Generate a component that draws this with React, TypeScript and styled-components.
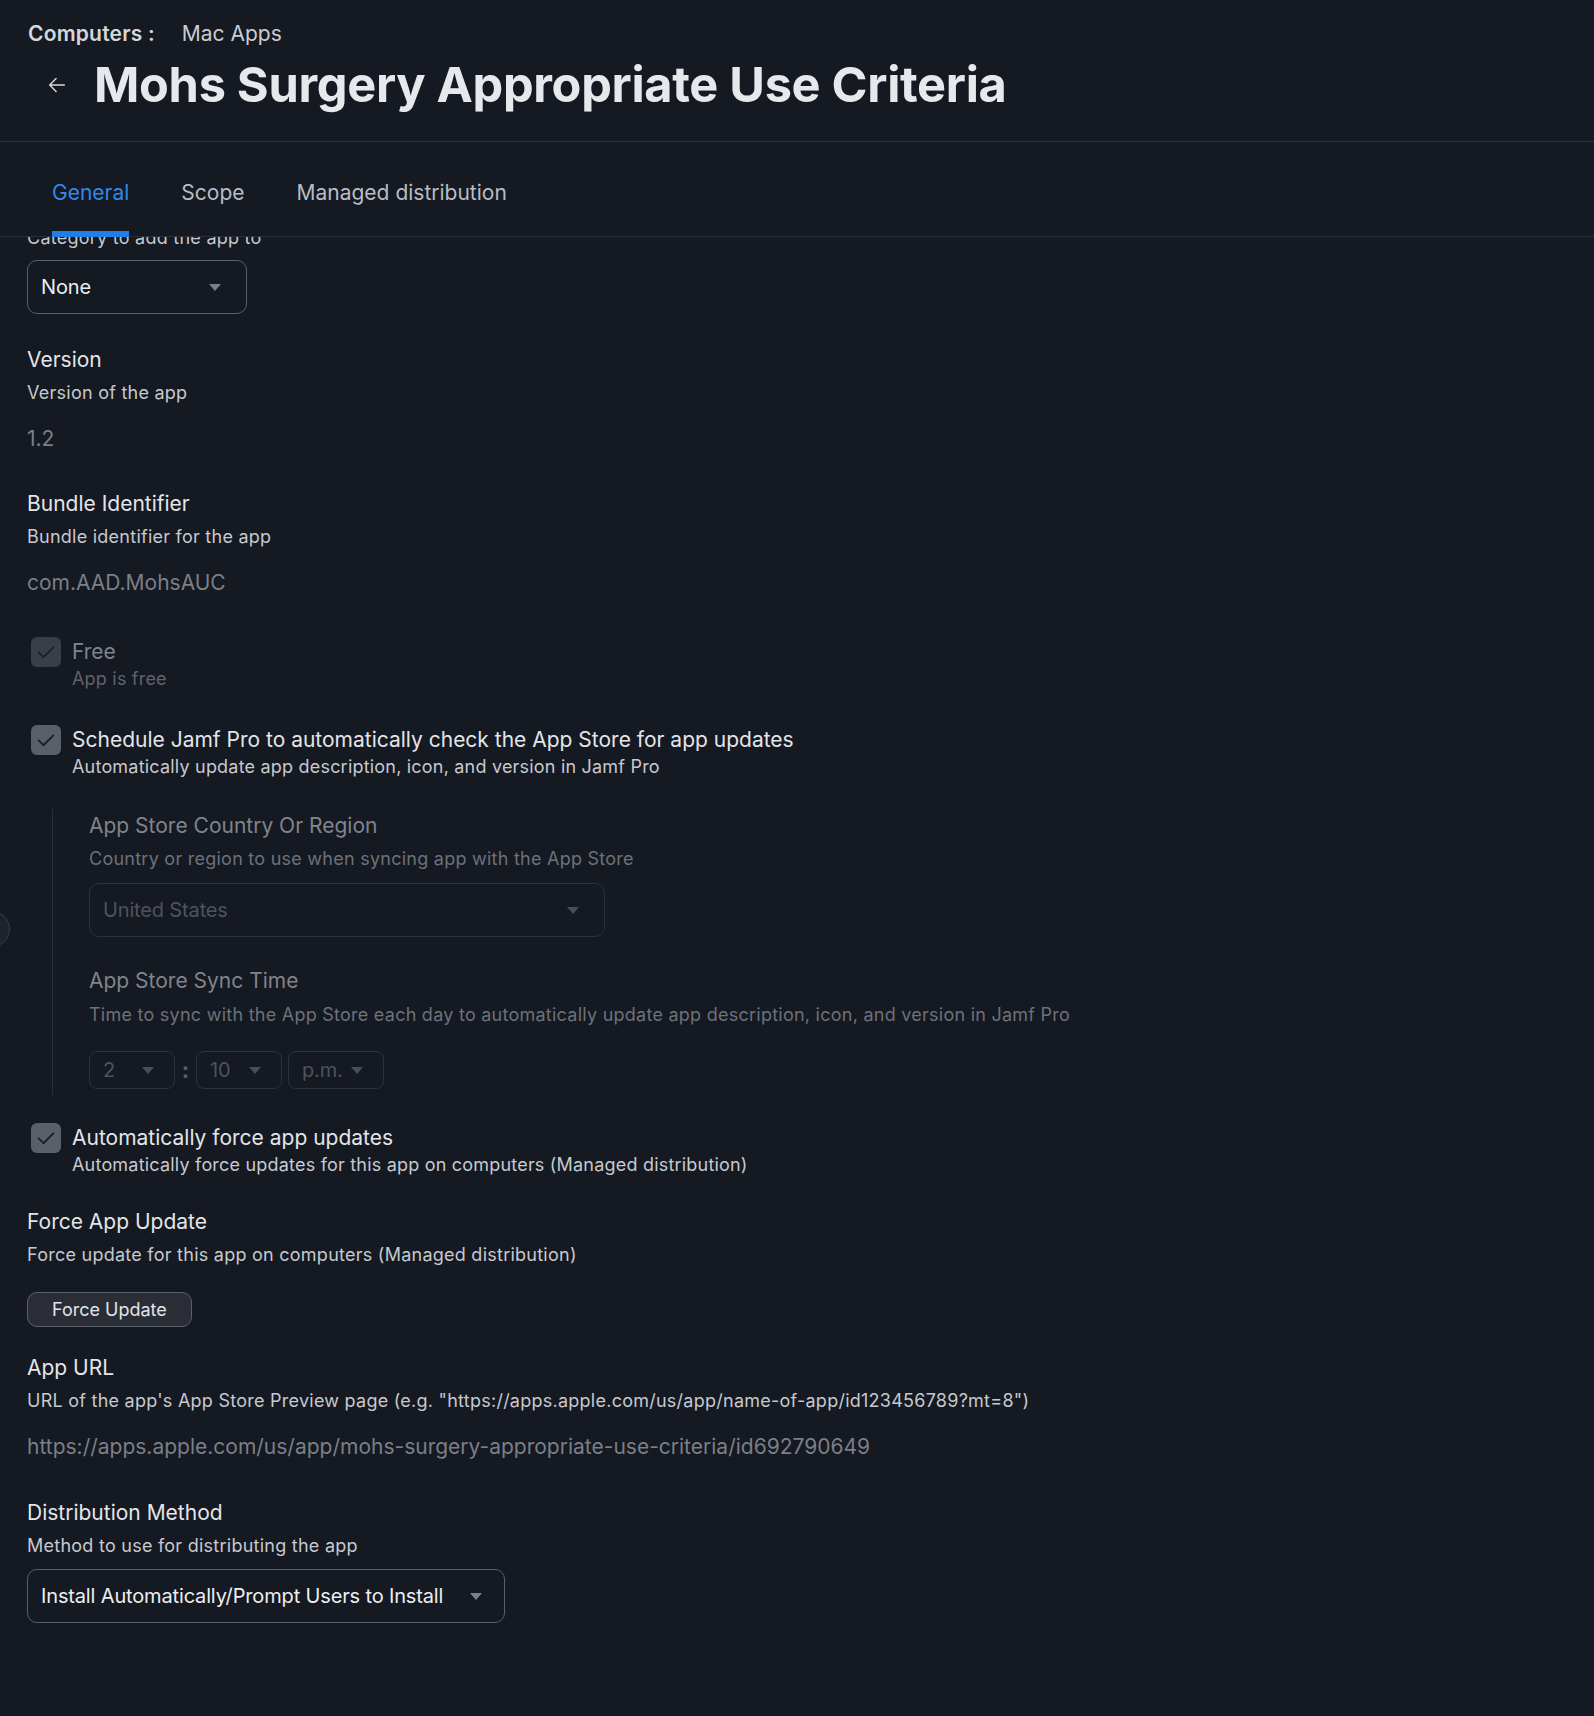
import React from "react";
import styled, { createGlobalStyle } from "styled-components";

const Global = createGlobalStyle`
  html, body { margin: 0; padding: 0; background: #151921; }
  body { font-family: Inter, "Noto Sans", sans-serif; color: #e3e5e9; -webkit-font-smoothing: antialiased; }
  * { box-sizing: border-box; }
`;

const Page = styled.div`
  width: 1594px;
  height: 1716px;
  background: #151921;
  display: flex;
  flex-direction: column;
  overflow: hidden;
  position: relative;
`;

const Header = styled.header`
  padding: 20px 28px 0 28px;
  height: 142px;
  border-bottom: 1px solid #2b2f37;
  display: flex;
  flex-direction: column;
`;

const Crumbs = styled.div`
  display: flex;
  align-items: center;
  gap: 27px;
  font-size: 21px;
  line-height: 28px;
  color: #c9ccd2;
`;

const CrumbRoot = styled.span`
  font-weight: 600;
  color: #d4d7dc;
  letter-spacing: 0.2px;
`;

const TitleRow = styled.div`
  display: flex;
  align-items: center;
  gap: 18px;
  margin-top: 9px;
  padding-left: 18px;
`;

const BackBtn = styled.span`
  display: flex;
  width: 30px;
  color: #d5d8dd;
`;

const Title = styled.h1`
  margin: 0;
  font-size: 48.7px;
  line-height: 56px;
  font-weight: 700;
  color: #e6e8ec;
  letter-spacing: -0.3px;
`;

const Tabs = styled.nav`
  height: 95px;
  border-bottom: 1px solid #2b2f37;
  display: flex;
  align-items: flex-end;
  padding-left: 52px;
  position: relative;
  z-index: 2;
  background: #151921;
`;

const Tab = styled.div<{ $active?: boolean }>`
  font-size: 21px;
  line-height: 28px;
  color: ${(p) => (p.$active ? "#2f8ae8" : "#b9bdc4")};
  padding-bottom: 24px;
  margin-right: 52px;
  border-bottom: 6px solid ${(p) => (p.$active ? "#1f7fe5" : "transparent")};
  margin-bottom: -1px;
`;

const Viewport = styled.main`
  flex: 1;
  overflow: hidden;
  padding-left: 27px;
`;

const Scroll = styled.div`
  display: flex;
  flex-direction: column;
  margin-top: -11px;
`;

const Label = styled.div<{ $dim?: boolean; $mt?: number }>`
  font-size: 21px;
  line-height: 28px;
  color: ${(p) => (p.$dim ? "#80848c" : "#e3e5e9")};
  margin-top: ${(p) => p.$mt ?? 0}px;
`;

const Desc = styled.div<{ $dim?: boolean; $mt?: number }>`
  font-size: 18px;
  line-height: 24px;
  letter-spacing: 0.25px;
  color: ${(p) => (p.$dim ? "#6d717a" : "#c6c9cf")};
  margin-top: ${(p) => p.$mt ?? 7}px;
`;

const Value = styled.div<{ $mt?: number }>`
  font-size: 21px;
  line-height: 28px;
  color: #7b7f87;
  margin-top: ${(p) => p.$mt ?? 20}px;
`;

const Select = styled.div<{ $w: number; $h?: number; $disabled?: boolean; $mt?: number; $pad?: number }>`
  width: ${(p) => p.$w}px;
  height: ${(p) => p.$h ?? 54}px;
  margin-top: ${(p) => p.$mt ?? 0}px;
  border: 1px solid ${(p) => (p.$disabled ? "#2d3139" : "#5b5f68")};
  border-radius: ${(p) => (p.$h && p.$h < 45 ? 8 : 10)}px;
  display: flex;
  align-items: center;
  justify-content: space-between;
  padding: 0 ${(p) => p.$pad ?? 25}px 0 13px;
  font-size: 20px;
  letter-spacing: -0.15px;
  color: ${(p) => (p.$disabled ? "#4f535b" : "#eceef1")};
  flex-shrink: 0;
`;

const Caret = styled.span<{ $disabled?: boolean }>`
  width: 0;
  height: 0;
  border-left: 6px solid transparent;
  border-right: 6px solid transparent;
  border-top: 7px solid ${(p) => (p.$disabled ? "#4a4e57" : "#7a7f8c")};
`;

const CheckRow = styled.div<{ $mt: number }>`
  display: flex;
  align-items: flex-start;
  gap: 11px;
  margin-top: ${(p) => p.$mt}px;
  padding-left: 4px;
`;

const Box = styled.span<{ $dim?: boolean }>`
  width: 30px;
  height: 30px;
  border-radius: 6px;
  background: ${(p) => (p.$dim ? "#3a3e46" : "#5b5f67")};
  display: flex;
  align-items: center;
  justify-content: center;
  flex-shrink: 0;
  color: ${(p) => (p.$dim ? "#1c2027" : "#1b1e24")};
  margin-top: -1px;
`;

const CheckText = styled.div`
  display: flex;
  flex-direction: column;
`;

const SubDesc = styled.div<{ $dim?: boolean }>`
  font-size: 18px;
  line-height: 24px;
  letter-spacing: 0.2px;
  color: ${(p) => (p.$dim ? "#5f636b" : "#c6c9cf")};
  margin-top: 1px;
`;

const Indent = styled.div`
  margin-top: 30px;
  margin-left: 25px;
  border-left: 1px solid #2a2e36;
  padding: 3px 0 6px 36px;
  display: flex;
  flex-direction: column;
`;

const TimeRow = styled.div`
  display: flex;
  align-items: center;
  margin-top: 24px;
`;

const Colon = styled.span`
  width: 21px;
  text-align: center;
  font-size: 22px;
  font-weight: 700;
  color: #5a5e66;
`;

const Gap = styled.span`
  width: 6px;
`;

const Button = styled.button`
  margin-top: 25px;
  align-self: flex-start;
  height: 35px;
  padding: 0 24px;
  border-radius: 10px;
  border: 1px solid #5c6068;
  background: #2a2d35;
  color: #e2e4e8;
  font-family: Inter, "Noto Sans", sans-serif;
  font-size: 18px;
`;

const EdgeKnob = styled.span`
  position: absolute;
  left: -26px;
  top: 911px;
  width: 36px;
  height: 36px;
  border-radius: 50%;
  background: #1e222a;
  border: 1px solid #3a3e46;
`;

const Check = () => (
  <svg width="22" height="22" viewBox="0 0 24 24" fill="none" stroke="currentColor" strokeWidth="2" strokeLinecap="round" strokeLinejoin="round">
    <path d="M4 12.5l5.2 5.2L20 7" />
  </svg>
);

const Arrow = () => (
  <svg width="22" height="22" viewBox="0 0 24 24" fill="none" stroke="currentColor" strokeWidth="1.6" strokeLinecap="round" strokeLinejoin="round">
    <path d="M20 12H4M11 5l-7 7 7 7" />
  </svg>
);

export default function App() {
  return (
    <Page>
      <Global />
      <Header>
        <Crumbs>
          <CrumbRoot>Computers :</CrumbRoot>
          <span>Mac Apps</span>
        </Crumbs>
        <TitleRow>
          <BackBtn>
            <Arrow />
          </BackBtn>
          <Title>Mohs Surgery Appropriate Use Criteria</Title>
        </TitleRow>
      </Header>
      <Tabs>
        <Tab $active>General</Tab>
        <Tab>Scope</Tab>
        <Tab>Managed distribution</Tab>
      </Tabs>
      <Viewport>
        <Scroll>
          <Desc $mt={0}>Category to add the app to</Desc>
          <Select $w={220} $mt={10} $pad={25}>
            None
            <Caret />
          </Select>

          <Label $mt={32}>Version</Label>
          <Desc>Version of the app</Desc>
          <Value>1.2</Value>

          <Label $mt={37}>Bundle Identifier</Label>
          <Desc>Bundle identifier for the app</Desc>
          <Value>com.AAD.MohsAUC</Value>

          <CheckRow $mt={41}>
            <Box $dim>
              <Check />
            </Box>
            <CheckText>
              <Label $dim>Free</Label>
              <SubDesc $dim>App is free</SubDesc>
            </CheckText>
          </CheckRow>

          <CheckRow $mt={35}>
            <Box>
              <Check />
            </Box>
            <CheckText>
              <Label>Schedule Jamf Pro to automatically check the App Store for app updates</Label>
              <SubDesc>Automatically update app description, icon, and version in Jamf Pro</SubDesc>
            </CheckText>
          </CheckRow>

          <Indent>
            <Label $dim>App Store Country Or Region</Label>
            <Desc $dim>Country or region to use when syncing app with the App Store</Desc>
            <Select $w={516} $mt={12} $disabled>
              United States
              <Caret $disabled />
            </Select>
            <Label $dim $mt={30}>App Store Sync Time</Label>
            <Desc $dim $mt={8}>
              Time to sync with the App Store each day to automatically update app description, icon, and version in Jamf Pro
            </Desc>
            <TimeRow>
              <Select $w={86} $h={38} $disabled $pad={20}>
                2
                <Caret $disabled />
              </Select>
              <Colon>:</Colon>
              <Select $w={86} $h={38} $disabled $pad={20}>
                10
                <Caret $disabled />
              </Select>
              <Gap />
              <Select $w={96} $h={38} $disabled $pad={20}>
                p.m.
                <Caret $disabled />
              </Select>
            </TimeRow>
          </Indent>

          <CheckRow $mt={29}>
            <Box>
              <Check />
            </Box>
            <CheckText>
              <Label>Automatically force app updates</Label>
              <SubDesc>Automatically force updates for this app on computers (Managed distribution)</SubDesc>
            </CheckText>
          </CheckRow>

          <Label $mt={31}>Force App Update</Label>
          <Desc>Force update for this app on computers (Managed distribution)</Desc>
          <Button>Force Update</Button>

          <Label $mt={27}>App URL</Label>
          <Desc>URL of the app's App Store Preview page (e.g. "https://apps.apple.com/us/app/name-of-app/id123456789?mt=8")</Desc>
          <Value>https://apps.apple.com/us/app/mohs-surgery-appropriate-use-criteria/id692790649</Value>

          <Label $mt={38}>Distribution Method</Label>
          <Desc>Method to use for distributing the app</Desc>
          <Select $w={478} $mt={11} $pad={22}>
            Install Automatically/Prompt Users to Install
            <Caret />
          </Select>
        </Scroll>
      </Viewport>
      <EdgeKnob />
    </Page>
  );
}
